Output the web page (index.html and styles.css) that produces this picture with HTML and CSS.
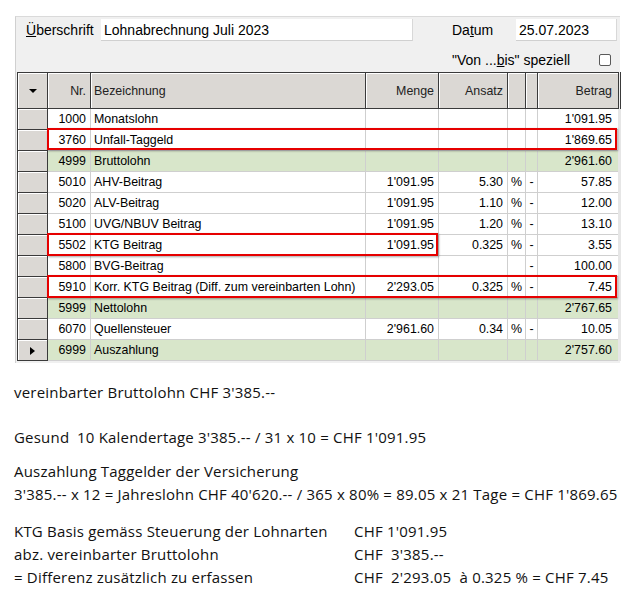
FILE: index.html
```html
<!DOCTYPE html>
<html lang="de">
<head>
    <meta charset="UTF-8">
    <meta name="viewport" content="width=device-width, initial-scale=1.0">
    <title>Lohnabrechnung Juli 2023</title>
    <link rel="stylesheet" href="styles.css">
</head>
<body>
    <div class="panel">
        <div class="form">
            <label class="lbl"><u>Ü</u>berschrift</label>
            <div class="field">Lohnabrechnung Juli 2023</div>
            <span></span>
            <label class="lbl">Da<u>t</u>um</label>
            <div class="field">25.07.2023</div>

            <div class="special">
                <span>"Von ...<u>b</u>is" speziell</span>
                <span class="check"></span>
            </div>
        </div>

        <div class="grid-wrap">
            <table class="grid">
                <colgroup>
                    <col style="width:30px">
                    <col style="width:43px">
                    <col style="width:275px">
                    <col style="width:73px">
                    <col style="width:69px">
                    <col style="width:18px">
                    <col style="width:12px">
                    <col style="width:82px">
                </colgroup>
                <thead>
                    <tr>
                        <th class="sel"><span class="arrow-down"></span></th>
                        <th class="num">Nr.</th>
                        <th class="txt">Bezeichnung</th>
                        <th class="num">Menge</th>
                        <th class="num">Ansatz</th>
                        <th></th>
                        <th></th>
                        <th class="num last">Betrag</th>
                    </tr>
                </thead>
                <tbody id="rows"></tbody>
            </table>

            <!-- Markierungen -->
            <div class="mark mark-a"></div>
            <div class="mark mark-b"></div>
            <div class="mark mark-c"></div>
        </div>
    </div>

    <div class="notes">
        <p>vereinbarter Bruttolohn CHF 3'385.--</p>
        <p class="gap-big"><span class="tab">Gesund</span>10 Kalendertage 3'385.-- / 31 x 10 = CHF 1'091.95</p>
        <p>Auszahlung Taggelder der Versicherung<br>3'385.-- x 12 = Jahreslohn CHF 40'620.-- / 365 x 80% = 89.05 x 21 Tage = CHF 1'869.65</p>
        <div class="calc">
            <span>KTG Basis gemäss Steuerung der Lohnarten</span><span>CHF 1'091.95</span>
            <span>abz. vereinbarter Bruttolohn</span><span>CHF  3'385.--</span>
            <span>= Differenz zusätzlich zu erfassen</span><span>CHF  2'293.05  à 0.325 % = CHF 7.45</span>
        </div>
    </div>

    <script>
        // Nr, Bezeichnung, Menge, Ansatz, %, -, Betrag, Summenzeile
        const lohnarten = [
            ['1000', 'Monatslohn', '', '', '', '', "1'091.95", false],
            ['3760', 'Unfall-Taggeld', '', '', '', '', "1'869.65", false],
            ['4999', 'Bruttolohn', '', '', '', '', "2'961.60", true],
            ['5010', 'AHV-Beitrag', "1'091.95", '5.30', '%', '-', '57.85', false],
            ['5020', 'ALV-Beitrag', "1'091.95", '1.10', '%', '-', '12.00', false],
            ['5100', 'UVG/NBUV Beitrag', "1'091.95", '1.20', '%', '-', '13.10', false],
            ['5502', 'KTG Beitrag', "1'091.95", '0.325', '%', '-', '3.55', false],
            ['5800', 'BVG-Beitrag', '', '', '', '-', '100.00', false],
            ['5910', 'Korr. KTG Beitrag (Diff. zum vereinbarten Lohn)', "2'293.05", '0.325', '%', '-', '7.45', false],
            ['5999', 'Nettolohn', '', '', '', '', "2'767.65", true],
            ['6070', 'Quellensteuer', "2'961.60", '0.34', '%', '-', '10.05', false],
            ['6999', 'Auszahlung', '', '', '', '', "2'757.60", true]
        ];

        const tbody = document.getElementById('rows');

        lohnarten.forEach((r, i) => {
            const tr = document.createElement('tr');
            if (r[7]) tr.className = 'sum';
            const current = i === lohnarten.length - 1;
            tr.innerHTML =
                `<td class="sel">${current ? '<span class="arrow-right"></span>' : ''}</td>` +
                `<td class="num">${r[0]}</td>` +
                `<td class="txt">${r[1]}</td>` +
                `<td class="num">${r[2]}</td>` +
                `<td class="num">${r[3]}</td>` +
                `<td class="unit">${r[4]}</td>` +
                `<td class="sign">${r[5]}</td>` +
                `<td class="num last">${r[6]}</td>`;
            tbody.appendChild(tr);
        });
    </script>
</body>
</html>
```

FILE: styles.css
```css
body {
    margin: 0;
    background: #fff;
    font-family: 'Liberation Sans', Arial, sans-serif;
    color: #000;
}

.panel {
    margin: 16px 0 0 15px;
    width: 604px;
    background: #f0f0f0;
    border-top: 1px solid #dadada;
    border-left: 1px solid #d0d0d0;
    padding-bottom: 2px;
}

/* Kopfbereich */
.form {
    display: grid;
    grid-template-columns: 75px 312px 39px 64px 101px;
    grid-template-rows: 22px 31px;
    padding: 2px 0 0 10px;
    font-size: 14px;
    align-items: center;
}

.lbl {
    color: #000;
}

.field {
    height: 22px;
    line-height: 22px;
    background: #fff;
    border-right: 1px solid #d8d8d8;
    border-bottom: 1px solid #d0d0d0;
    box-sizing: border-box;
    padding-left: 3px;
}

.special {
    grid-column: 4 / 6;
    display: flex;
    align-items: center;
    justify-content: space-between;
    padding: 7px 6px 0 0;
}

.check {
    width: 10px;
    height: 10px;
    border: 1px solid #5a5a5a;
    border-radius: 2px;
    background: #fff;
}

/* Tabelle */
.grid-wrap {
    position: relative;
    margin-left: 1px;
    width: 602px;
}

.grid {
    border-collapse: collapse;
    table-layout: fixed;
    width: 602px;
    font-size: 12.4px;
}

.grid th,
.grid td {
    padding: 0;
    white-space: nowrap;
    overflow: hidden;
}

.grid th {
    height: 35px;
    background: #dbd8d4;
    font-weight: normal;
    border-top: 1px solid #3a3a3a;
    border-bottom: 1px solid #3a3a3a;
    border-right: 1px solid #3a3a3a;
    box-shadow: inset 1px 1px 0 #fff;
    color: #222;
}

.grid th:first-child {
    border-left: 1px solid #3a3a3a;
}

.grid th.last {
    border-right: 3px double #3a3a3a;
}

.grid td {
    height: 20px;
    background: #fff;
    border-right: 1px solid #cfcfcf;
    border-bottom: 1px solid #cfcfcf;
}

.grid tr.sum td {
    background: #d8e6ca;
}

.grid td.last {
    border-right: 3px solid #e6e6e6;
}

.grid td.sel,
.grid tr.sum td.sel {
    background: #dbd8d4;
    border-left: 1px solid #3a3a3a;
    border-right: 1px solid #3a3a3a;
    border-bottom: 1px solid #3a3a3a;
    box-shadow: inset 1px 1px 0 #fff;
    text-align: center;
}

.num {
    text-align: right;
    padding-right: 4px !important;
}

.grid .last {
    padding-right: 6px !important;
}

.txt {
    text-align: left;
    padding-left: 3px !important;
}

.unit {
    padding-left: 3px !important;
}

.sign {
    text-align: center;
}

.grid th.sel {
    text-align: center;
}

.arrow-down {
    display: inline-block;
    width: 0;
    height: 0;
    border-left: 4px solid transparent;
    border-right: 4px solid transparent;
    border-top: 4px solid #000;
    vertical-align: middle;
}

.arrow-right {
    display: inline-block;
    width: 0;
    height: 0;
    border-top: 4px solid transparent;
    border-bottom: 4px solid transparent;
    border-left: 5px solid #000;
    vertical-align: middle;
}

/* rote Rahmen um die betroffenen Zeilen */
.mark {
    position: absolute;
    border: 2px solid #e60000;
    box-shadow: 1px 1px 2px rgba(0, 0, 0, 0.35);
    box-sizing: border-box;
}

.mark-a {
    left: 30px;
    top: 56px;
    width: 570px;
    height: 22px;
}

.mark-b {
    left: 30px;
    top: 161px;
    width: 391px;
    height: 23px;
}

.mark-c {
    left: 30px;
    top: 203px;
    width: 570px;
    height: 23px;
}

/* Erläuterungen */
.notes {
    margin: 18px 0 0 14px;
    font-family: 'Open Sans', 'Liberation Sans', sans-serif;
    font-size: 15px;
    letter-spacing: 0.2px;
    line-height: 23px;
    color: #111;
}

.notes p {
    margin: 0 0 11px;
}

.notes p.gap-big {
    margin-top: 22px;
}

.tab {
    display: inline-block;
    width: 63px;
}

.calc {
    display: grid;
    grid-template-columns: 340px auto;
    margin-top: 14px;
    white-space: pre;
}
```
